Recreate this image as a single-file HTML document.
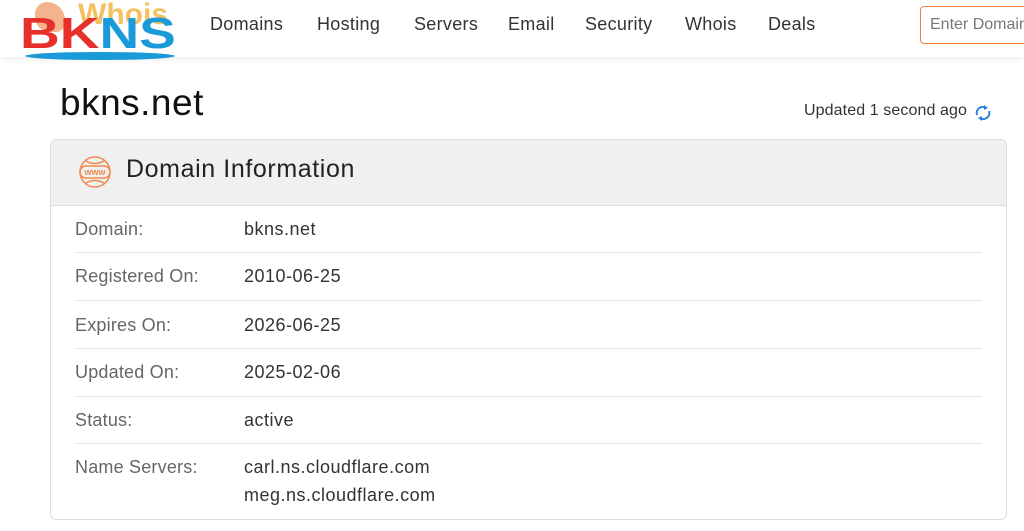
<!DOCTYPE html>
<html><head><meta charset="utf-8"><style>
*{margin:0;padding:0;box-sizing:border-box}
body{width:1024px;height:531px;overflow:hidden;background:#fff;font-family:"Liberation Sans","DejaVu Sans",sans-serif;color:#222;position:relative}
.hdr{position:absolute;left:0;top:0;width:1024px;height:57px;background:#fff;box-shadow:0 2px 6px rgba(0,0,0,.08)}
.nav{position:absolute;top:14px;font-size:18px;color:#333;letter-spacing:.3px}
.search{position:absolute;left:920px;top:6px;width:120px;height:38px;border:1px solid #f08040;border-radius:4px;padding:9px 9px;font-size:16px;color:#777;white-space:nowrap;overflow:hidden}
h1{position:absolute;left:60px;top:82px;font-size:37px;font-weight:normal;color:#111;letter-spacing:.5px}
.upd{position:absolute;left:804px;top:102px;font-size:16px;color:#333;letter-spacing:.1px}
.card{position:absolute;left:50px;top:139px;width:957px;height:381px;border:1px solid #ddd;border-radius:6px;overflow:hidden}
.ch{height:66px;background:#f0f0f0;border-bottom:1px solid #ddd;position:relative}
.ch span{position:absolute;left:75px;top:15px;font-size:25px;color:#222;letter-spacing:.6px}
.row{position:absolute;left:24px;width:907px;border-bottom:1px solid #e5e5e5;font-size:18px;letter-spacing:.2px}
.row .l{position:absolute;left:0;color:#666}
.row .v{position:absolute;left:169px;color:#333;line-height:28px;letter-spacing:.5px}
</style></head><body>
<div class="hdr">
<div style="position:absolute;left:35px;top:2px;width:30px;height:30px;background:#f0a070;border-radius:40% 60% 30% 50%;opacity:.8"></div>
<div style="position:absolute;left:78px;top:-2px;font-size:30px;font-weight:bold;color:#f5c060">Whois</div>
<div style="position:absolute;left:20px;top:12px;font-size:44px;font-weight:bold;line-height:44px;transform:scaleX(1.25);transform-origin:left"><span style="color:#e8302a">BK</span><span style="color:#1a9ad8">NS</span></div>
<div style="position:absolute;left:25px;top:52px;width:150px;height:8px;border-radius:50%;background:#1a9ad8"></div>
<div class="nav" style="left:210px">Domains</div>
<div class="nav" style="left:317px">Hosting</div>
<div class="nav" style="left:414px">Servers</div>
<div class="nav" style="left:508px">Email</div>
<div class="nav" style="left:585px">Security</div>
<div class="nav" style="left:685px">Whois</div>
<div class="nav" style="left:768px">Deals</div>
<div class="search">Enter Domain</div>
</div>
<h1>bkns.net</h1>
<div class="upd">Updated 1 second ago</div>
<svg style="position:absolute;left:974px;top:103px" width="18" height="20" viewBox="0 0 18 20"><path d="M3 12a6 6 0 0 1 9-7" stroke="#2a7de1" stroke-width="2" fill="none"/><path d="M10 2l4 3-4 2z" fill="#2a7de1"/><path d="M15 8a6 6 0 0 1-9 7" stroke="#2a7de1" stroke-width="2" fill="none"/><path d="M8 18l-4-3 4-2z" fill="#2a7de1"/></svg>
<div class="card">
<div class="ch">
<svg style="position:absolute;left:26px;top:14px" width="36" height="36" viewBox="0 0 36 36" fill="none" stroke="#f08a50" stroke-width="1.5"><circle cx="18" cy="18" r="15"/><path d="M9 7q9 5 18 0M9 29q9-5 18 0"/><rect x="3" y="12" width="30" height="12" rx="6" fill="#f0f0f0"/><text x="18" y="21" font-size="9" fill="#f08a50" stroke="none" text-anchor="middle" font-family="Liberation Sans" font-weight="bold">www</text></svg>
<span>Domain Information</span></div>
<div class="row" style="top:66px;height:47px"><div class="l" style="top:13px">Domain:</div><div class="v" style="top:9px">bkns.net</div></div>
<div class="row" style="top:113px;height:48px"><div class="l" style="top:13px">Registered On:</div><div class="v" style="top:9px">2010-06-25</div></div>
<div class="row" style="top:161px;height:48px"><div class="l" style="top:14px">Expires On:</div><div class="v" style="top:10px">2026-06-25</div></div>
<div class="row" style="top:209px;height:48px"><div class="l" style="top:13px">Updated On:</div><div class="v" style="top:9px">2025-02-06</div></div>
<div class="row" style="top:257px;height:47px"><div class="l" style="top:13px">Status:</div><div class="v" style="top:9px">active</div></div>
<div class="row" style="top:304px;height:70px;border:none"><div class="l" style="top:13px">Name Servers:</div><div class="v" style="top:9px">carl.ns.cloudflare.com<br>meg.ns.cloudflare.com</div></div>
</div>
</body></html>
